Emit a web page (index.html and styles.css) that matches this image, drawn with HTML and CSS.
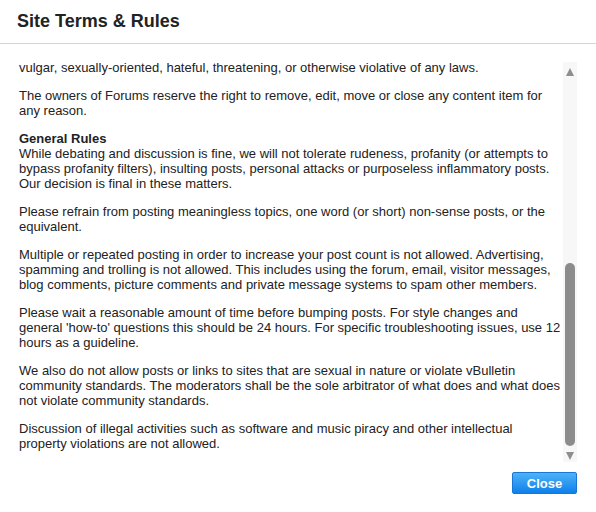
FILE: index.html
```html
<!DOCTYPE html>
<html>
<head>
<meta charset="utf-8">
<link rel="stylesheet" href="styles.css">
</head>
<body>
<div class="dialog">
  <div class="header"><h1 class="title">Site Terms &amp; Rules</h1></div>
  <div class="main">
    <div class="content">
      <p>vulgar, sexually-oriented, hateful, threatening, or otherwise violative of any laws.</p>
      <p>The owners of Forums reserve the right to remove, edit, move or close any content item for any reason.</p>
      <p><strong>General Rules</strong><br>While debating and discussion is fine, we will not tolerate rudeness, profanity (or attempts to bypass profanity filters), insulting posts, personal attacks or purposeless inflammatory posts. Our decision is final in these matters.</p>
      <p>Please refrain from posting meaningless topics, one word (or short) non-sense posts, or the equivalent.</p>
      <p>Multiple or repeated posting in order to increase your post count is not allowed. Advertising, spamming and trolling is not allowed. This includes using the forum, email, visitor messages, blog comments, picture comments and private message systems to spam other members.</p>
      <p>Please wait a reasonable amount of time before bumping posts. For style changes and general 'how-to' questions this should be 24 hours. For specific troubleshooting issues, use 12 hours as a guideline.</p>
      <p>We also do not allow posts or links to sites that are sexual in nature or violate vBulletin community standards. The moderators shall be the sole arbitrator of what does and what does not violate community standards.</p>
      <p>Discussion of illegal activities such as software and music piracy and other intellectual property violations are not allowed.</p>
    </div>
    <div class="scrollbar">
      <div class="arrow arrow-up"></div>
      <div class="track"><div class="thumb"></div></div>
      <div class="arrow arrow-down"></div>
    </div>
  </div>
  <div class="footer"><button class="btn">Close</button></div>
</div>
</body>
</html>
```
FILE: styles.css
```css
html, body {
  margin: 0;
  padding: 0;
  background: #fff;
}
body {
  width: 596px;
  height: 512px;
  overflow: hidden;
  font-family: "Liberation Sans", Arial, sans-serif;
  color: #222;
}
.dialog {
  display: flex;
  flex-direction: column;
  height: 512px;
}
.header {
  height: 43px;
  border-bottom: 1px solid #d4d4d4;
  display: flex;
  align-items: center;
  padding: 0 17px;
  box-sizing: content-box;
}
.title {
  margin: 0;
  font-size: 18px;
  font-weight: bold;
  color: #222;
}
.main {
  display: flex;
  height: 420px;
}
.content {
  width: 544px;
  flex-shrink: 0;
  padding: 16px 0 0 19px;
  overflow: hidden;
  font-size: 13px;
  line-height: 15px;
}
.content p {
  margin: 0 0 13px 0;
}
.content strong {
  font-weight: bold;
}
.scrollbar {
  margin: 18px 0 0 0;
  width: 14px;
  height: 400px;
  background: #f7f7f7;
  display: flex;
  flex-direction: column;
  align-items: center;
}
.arrow {
  width: 0;
  height: 0;
  border-left: 4.5px solid transparent;
  border-right: 4.5px solid transparent;
}
.arrow-up {
  margin-top: 6px;
  border-bottom: 8px solid #8e8e8e;
}
.arrow-down {
  margin-bottom: 2px;
  border-top: 8px solid #8e8e8e;
}
.track {
  flex: 1;
  width: 100%;
  display: flex;
  flex-direction: column;
  align-items: center;
  padding-top: 187px;
  padding-bottom: 6px;
}
.thumb {
  width: 10px;
  flex: 1;
  background: #8c8c8c;
  border-radius: 5px;
}
.footer {
  display: flex;
  justify-content: flex-end;
  padding: 8px 19px 0 0;
}
.btn {
  width: 65px;
  height: 22px;
  padding: 0;
  border: 1px solid #1877d3;
  border-radius: 2px;
  background: linear-gradient(#4db2f8, #0e80ea);
  color: #fff;
  font-family: "Liberation Sans", Arial, sans-serif;
  font-size: 13px;
  font-weight: bold;
}
```
